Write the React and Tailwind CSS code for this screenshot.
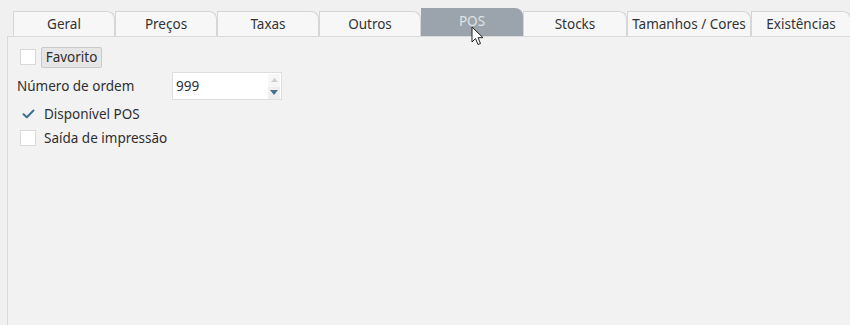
import React from "react";

const font = { fontFamily: '"Noto Sans", "Open Sans", sans-serif' };

function Tab({ label, w, active }) {
  if (active) {
    return (
      <div
        className="relative flex h-[28px] items-center justify-center rounded-tr-[8px] bg-[#9ba4ac] text-[13.5px] text-[#dfe3e6] shrink-0"
        style={{ width: w }}
      >
        <span className="-mt-[2px]">{label}</span>
      </div>
    );
  }
  return (
    <div
      className="flex h-[25px] items-center justify-center rounded-tr-[8px] border-l border-t border-r border-[#d6d6d6] bg-[#f7f7f7] text-[13.5px] text-[#333333] shrink-0"
      style={{ width: w }}
    >
      <span>{label}</span>
    </div>
  );
}

function Box({ checked }) {
  return (
    <div className="flex h-[16px] w-[16px] shrink-0 items-center justify-center">
      {checked ? (
        <svg width="13" height="10" viewBox="0 0 13 10">
          <path d="M1.5 5.2 L4.8 8.2 L11.5 1.5" fill="none" stroke="#3f6f8d" strokeWidth="2" strokeLinecap="round" strokeLinejoin="round" />
        </svg>
      ) : (
        <div className="h-[16px] w-[16px] border border-[#dadada] bg-white" />
      )}
    </div>
  );
}

export default function App() {
  const tabs = [
    ["Geral", 102],
    ["Preços", 102],
    ["Taxas", 102],
    ["Outros", 102],
    ["POS", 102, true],
    ["Stocks", 104],
    ["Tamanhos / Cores", 124],
    ["Existências", 100],
  ];
  return (
    <div className="relative h-[325px] w-[850px] overflow-hidden bg-[#f0f0f0]" style={font}>
      <div className="flex h-[36px] items-end pl-[13px]">
        {tabs.map(([l, w, a]) => (
          <Tab key={l} label={l} w={w} active={a} />
        ))}
      </div>
      <div className="ml-[7px] h-[289px] border-l border-t border-[#d9d9d9] bg-[#f2f2f2] pl-[12px] pt-[9px] text-[13.5px] text-[#2e2e2e]">
        <div className="flex h-[22px] items-center gap-[5px]">
          <Box />
          <div className="flex h-[21px] w-[61px] items-center justify-center rounded-[2px] border border-[#cacaca] bg-[#e6e6e6]">
            Favorito
          </div>
        </div>
        <div className="mt-[4px] flex h-[28px] items-center -ml-[3px]">
          <span className="w-[155px]">Número de ordem</span>
          <div className="relative flex h-[28px] w-[110px] items-center border border-[#dedede] bg-white pl-[3px]">
            <span>999</span>
            <div className="absolute right-[1px] top-[1px] flex h-[25px] w-[12px] flex-col">
              <div className="flex flex-1 items-center justify-center bg-[#f6f6f6]">
                <svg width="7" height="4" viewBox="0 0 7 4"><path d="M0 4 L3.5 0 L7 4Z" fill="#cfcfcf" /></svg>
              </div>
              <div className="flex flex-1 items-center justify-center bg-[#eeeeee]">
                <svg width="8" height="5" viewBox="0 0 8 5"><path d="M0 0 L8 0 L4 5Z" fill="#45728d" /></svg>
              </div>
            </div>
          </div>
        </div>
        <div className="mt-[4px] flex h-[20px] items-center gap-[8px]">
          <Box checked />
          <span>Disponível POS</span>
        </div>
        <div className="mt-[4px] flex h-[20px] items-center gap-[8px]">
          <Box />
          <span>Saída de impressão</span>
        </div>
      </div>
      <svg className="absolute left-[471px] top-[26px]" width="14" height="21" viewBox="0 0 14 21">
        <path d="M1 1 L1 16 L4.5 12.5 L7 18.5 L9.5 17.5 L7 11.7 L12 11.7 Z" fill="white" stroke="#222" strokeWidth="1" strokeLinejoin="round" />
      </svg>
    </div>
  );
}
